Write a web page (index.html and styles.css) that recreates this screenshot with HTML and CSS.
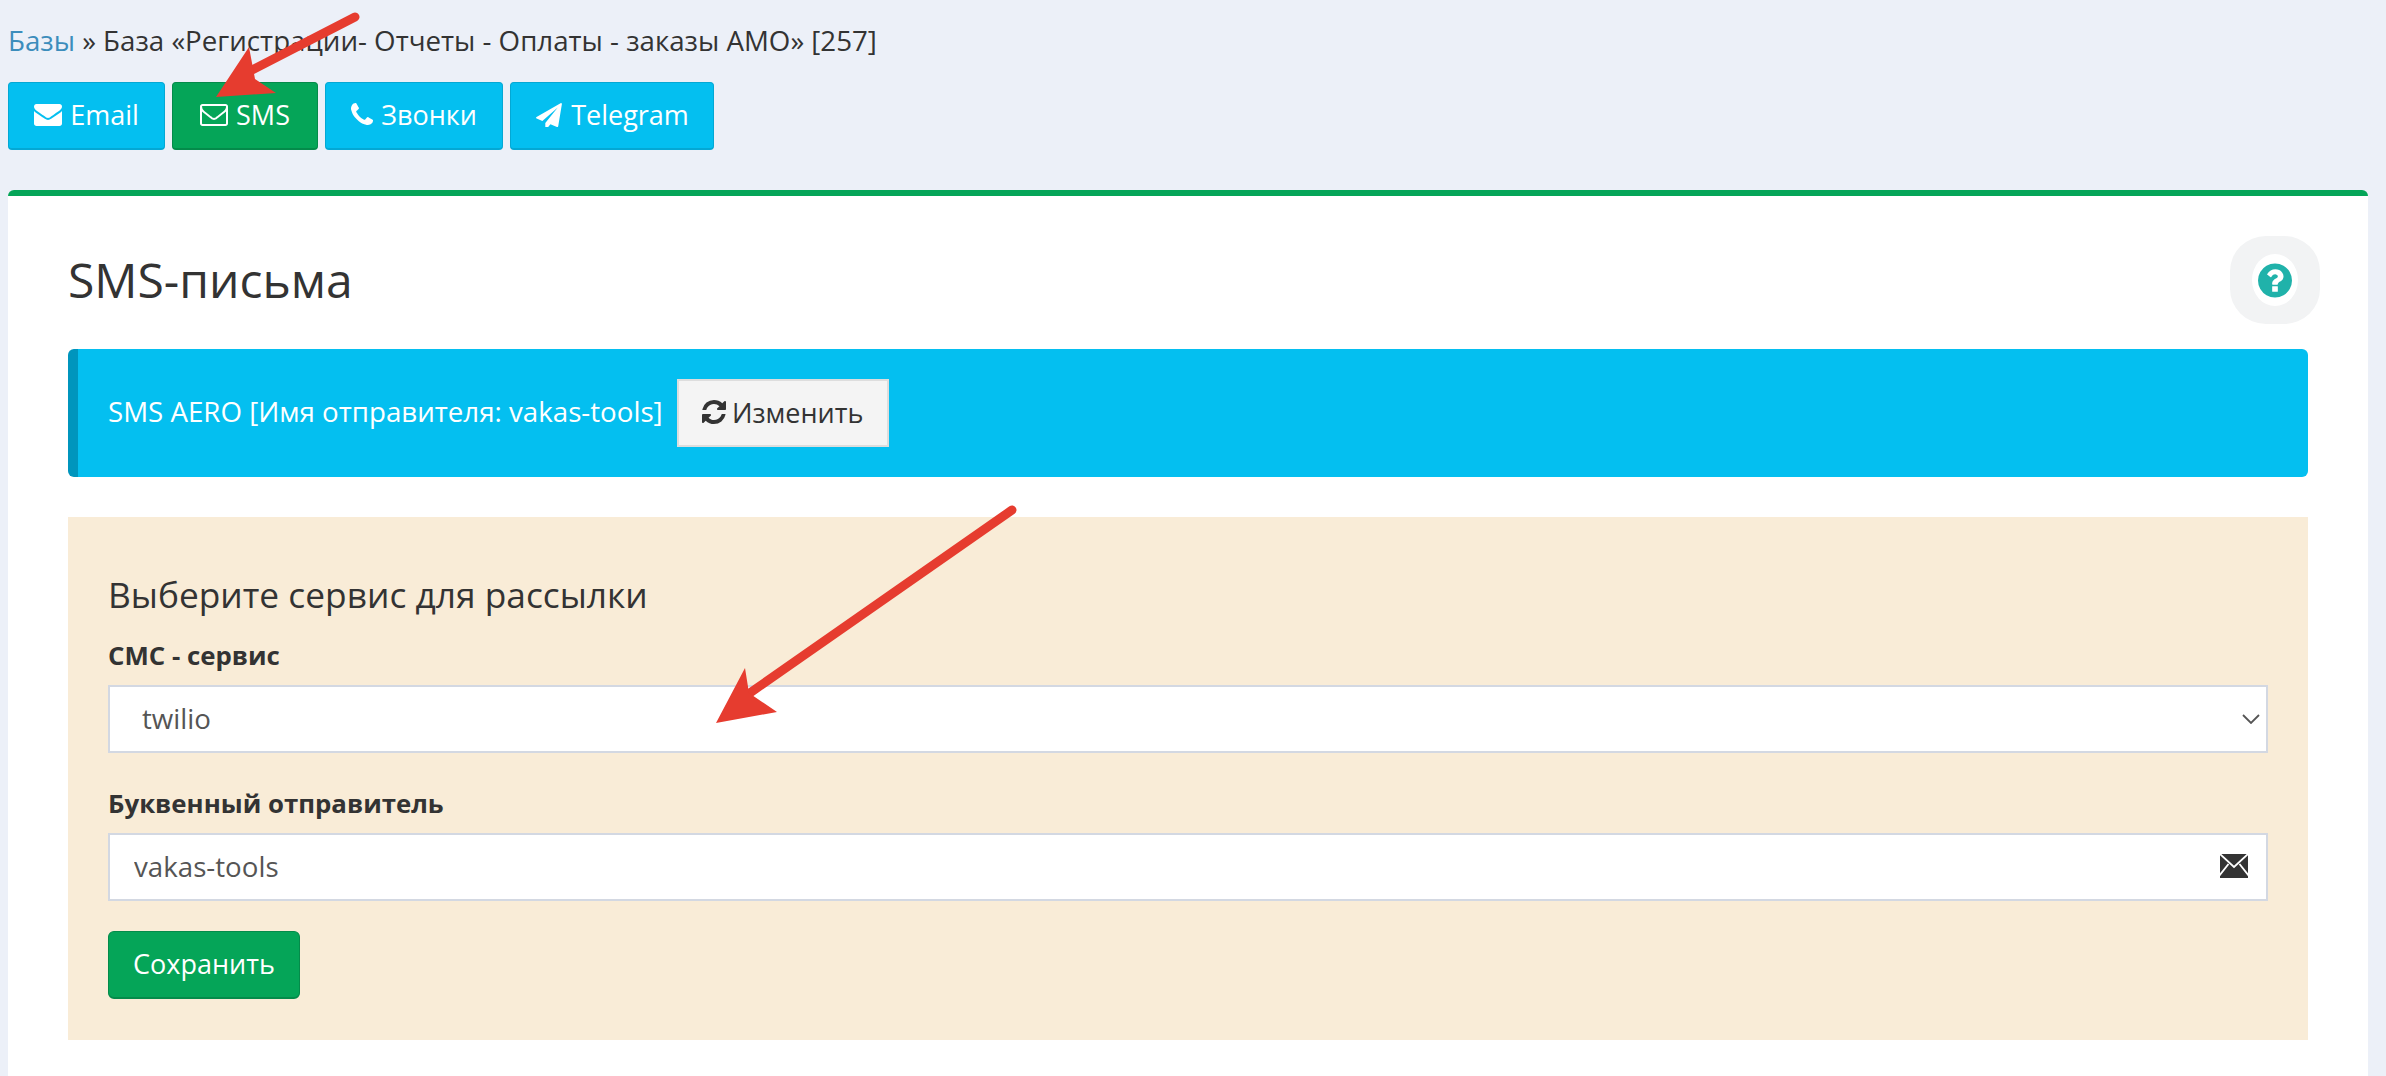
FILE: index.html
```html
<!DOCTYPE html>
<html lang="ru">
<head>
<meta charset="utf-8">
<title>SMS-письма</title>
<link rel="stylesheet" href="styles.css">
</head>
<body>
<svg width="0" height="0" class="defs">
  <symbol id="i-envelope" viewBox="0 256 1792 1408"><path d="M1792 710v794q0 66-47 113t-113 47h-1472q-66 0-113-47t-47-113v-794q44 49 101 87 362 246 497 345 57 42 92.5 65.5t94.5 48 110 24.5h2q51 0 110-24.5t94.5-48 92.5-65.5q170-123 498-345 57-39 100-87zm0-294q0 79-49 151t-122 123q-376 261-468 325-10 7-42.5 30.5t-54 38-52 32.5-57.5 27-50 9h-2q-23 0-50-9t-57.5-27-52-32.5-54-38-42.5-30.5q-91-64-262-182.5t-205-142.5q-62-42-117-115.5t-55-136.5q0-78 41.5-130t118.5-52h1472q65 0 112.5 47t47.5 113z"/></symbol>
  <symbol id="i-envelope-o" viewBox="0 256 1792 1408"><path d="M1664 1504v-768q-32 36-69 66-268 206-426 338-51 43-83 67t-86.5 48.5-102.5 24.5h-2q-48 0-102.5-24.5t-86.5-48.5-83-67q-158-132-426-338-37-30-69-66v768q0 13 9.5 22.5t22.5 9.5h1472q13 0 22.5-9.5t9.5-22.5zm0-1051v-24.5l-.5-13-3-12.5-5.5-9-9-7.5-14-2.5h-1472q-13 0-22.5 9.5t-9.5 22.5q0 168 147 284 193 152 401 317 6 5 35 29.5t46 37.5 44.5 31.5 50.5 27.5 43 9h2q20 0 43-9t50.5-27.5 44.5-31.5 46-37.5 35-29.5q208-165 401-317 54-43 100.5-115.5t46.5-131.5zm128-37v1088q0 66-47 113t-113 47h-1472q-66 0-113-47t-47-113v-1088q0-66 47-113t113-47h1472q66 0 113 47t47 113z"/></symbol>
  <symbol id="i-phone" viewBox="192 192 1408 1408"><path d="M1600 1240q0 27-10 70.5t-21 68.5q-21 50-122 106-94 51-186 51-27 0-53-3.5t-57.5-12.5-47-14.5-55.5-20.5-49-18q-98-35-175-83-127-79-264-216t-216-264q-48-77-83-175-3-9-18-49t-20.5-55.5-14.5-47-12.5-57.5-3.5-53q0-92 51-186 56-101 106-122 25-11 68.5-21t70.5-10q14 0 21 3 18 6 53 76 11 19 30 54t35 63.5 31 53.5q3 4 17.5 25t21.5 35.5 7 28.5q0 20-28.5 50t-62 55-62 53-28.5 46q0 9 5 22.5t8.5 20.5 14 24 11.5 19q76 137 174 235t235 174q2 1 19 11.5t24 14 20.5 8.5 22.5 5q18 0 46-28.5t53-62 55-62 50-28.5q14 0 28.5 7t35.5 21.5 25 17.5q25 15 53.5 31t63.5 35 54 30q70 35 76 53 3 7 3 21z"/></symbol>
  <symbol id="i-plane" viewBox="0 0 1792 1664"><path d="M1764 11q33 24 27 64l-256 1536q-5 29-32 45-14 8-31 8-11 0-24-5l-453-185-242 295q-18 23-49 23-13 0-22-4-19-7-30.5-23.5t-11.5-36.5v-349l864-1059-1069 925-395-162q-37-14-40-55-2-40 32-59l1664-960q15-9 32-9 20 0 36 11z"/></symbol>
  <symbol id="i-refresh" viewBox="128 128 1536 1536"><path d="M1639 1056q0 5-1 7-64 268-268 434.5t-478 166.5q-146 0-282.5-55t-243.5-157l-129 129q-19 19-45 19t-45-19-19-45v-448q0-26 19-45t45-19h448q26 0 45 19t19 45-19 45l-137 137q71 66 161 102t187 36q134 0 250-65t186-179q11-17 53-117 8-23 30-23h192q13 0 22.5 9.5t9.5 22.5zm25-800v448q0 26-19 45t-45 19h-448q-26 0-45-19t-19-45 19-45l138-138q-148-137-349-137-134 0-250 65t-186 179q-11 17-53 117-8 23-30 23h-199q-13 0-22.5-9.5t-9.5-22.5v-7q65-268 270-434.5t480-166.5q146 0 284 55.5t245 156.5l130-129q19-19 45-19t45 19 19 45z"/></symbol>
</svg>

<nav class="crumbs"><a class="crumb-link" href="#">Базы</a> » База «Регистрации- Отчеты - Оплаты - заказы АМО» [257]</nav>

<div class="tabs">
  <a class="tab tab-email" href="#"><svg class="ico ico-env"><use href="#i-envelope"/></svg>Email</a>
  <a class="tab tab-active" href="#"><svg class="ico ico-env"><use href="#i-envelope-o"/></svg>SMS</a>
  <a class="tab tab-calls" href="#"><svg class="ico ico-phone"><use href="#i-phone"/></svg>Звонки</a>
  <a class="tab tab-tg" href="#"><svg class="ico ico-env"><use href="#i-plane"/></svg>Telegram</a>
</div>

<main class="card">
  <header class="card-head">
    <h1 class="title">SMS-письма</h1>
    <a class="help" href="#" aria-label="Помощь">
      <span class="help-ring">
        <svg class="help-ico" viewBox="128 128 1536 1536"><path d="M1024 1376v-192q0-14-9-23t-23-9h-192q-14 0-23 9t-9 23v192q0 14 9 23t23 9h192q14 0 23-9t9-23zm256-672q0-88-55.5-163t-138.5-116-170-41q-243 0-371 213-15 24 8 42l132 100q7 6 19 6 16 0 25-12 53-68 86-92 34-24 86-24 48 0 85.5 26t37.5 59q0 38-20 61t-68 45q-63 28-115.5 86.5t-52.5 125.5v36q0 14 9 23t23 9h192q14 0 23-9t9-23q0-19 21.5-49.5t54.5-49.5q32-18 49-28.5t46-35 44.5-48 28-60.5 12.5-81zm384 192q0 209-103 385.5t-279.5 279.5-385.5 103-385.5-103-279.5-279.5-103-385.5 103-385.5 279.5-279.5 385.5-103 385.5 103 279.5 279.5 103 385.5z"/></svg>
      </span>
    </a>
  </header>

  <div class="notice">
    <span class="notice-text">SMS AERO [Имя отправителя: vakas-tools]</span>
    <a class="change" href="#"><svg class="ico ico-refresh"><use href="#i-refresh"/></svg>Изменить</a>
  </div>

  <form class="panel">
    <h2 class="panel-title">Выберите сервис для рассылки</h2>
    <div class="field">
      <label class="label" for="svc">СМС - сервис</label>
      <div class="control">
        <select class="input select" id="svc"><option>twilio</option></select>
        <svg class="chevron" viewBox="0 0 18 10"><path d="M1 1l8 8 8-8" fill="none" stroke="#555" stroke-width="1.8"/></svg>
      </div>
    </div>
    <div class="field">
      <label class="label" for="snd">Буквенный отправитель</label>
      <div class="control">
        <input class="input" id="snd" value="vakas-tools">
        <svg class="mail" viewBox="0 0 28 24"><rect width="28" height="24" fill="#333"/><path d="M0 0l14 13L28 0M-1 22l9.500-12M29 22l-9.500-12" fill="none" stroke="#fff" stroke-width="1.800"/></svg>
      </div>
    </div>
    <button class="save" type="button">Сохранить</button>
  </form>
</main>

<svg class="arrows" viewBox="0 0 2386 1076" aria-hidden="true">
  <path d="M355 17L252 70" class="shaft"/>
  <path d="M216 97L249 47 255 79 276 93Z" class="head"/>
  <path d="M1012 510L747 695" class="shaft"/>
  <path d="M716 723L745 668 749 693 777 712Z" class="head"/>
</svg>
</body>
</html>
```
FILE: styles.css
```css
* { box-sizing: border-box; }
html, body { height: 1076px; overflow: hidden; }
body {
  margin: 0;
  padding: 0 18px 0 8px;
  background: #ecf0f8;
  color: #333;
  font-family: "Open Sans", "Noto Sans", sans-serif;
  font-size: 27.700px;
  position: relative;
}
.defs { position: absolute; }
.crumbs { padding-top: 22px; height: 82px; line-height: 36px; white-space: nowrap; }
.crumb-link { color: #3c8dbc; text-decoration: none; }
.tabs { display: flex; gap: 7px; font-size: 27px; }
.tab {
  display: flex; align-items: center; justify-content: center; gap: 8px;
  height: 68px; padding-bottom: 2px;
  background: #04bff0; border: 1px solid #04a8d4; border-bottom-width: 2px; border-radius: 4px;
  color: #fff; text-decoration: none;
}
.tab-email { width: 157px; }
.tab-active { width: 146px; background: #05a558; border-color: #048b4a; }
.tab-calls { width: 178px; }
.tab-tg { width: 204px; }
.ico { fill: currentColor; display: block; flex: none; }
.ico-env { width: 28px; height: 24px; }
.ico-phone { width: 22px; height: 24px; }
.ico-refresh { width: 24px; height: 24px; }
.card {
  margin-top: 40px;
  height: 900px;
  padding: 40px 60px 0;
  background: #fff;
  border-top: 6px solid #05a558;
  border-radius: 6px 6px 0 0;
}
.card-head { display: flex; justify-content: space-between; align-items: center; height: 88px; margin: 0 -12px 25px 0; }
.title { margin: 0; font-size: 48px; font-weight: 400; line-height: 1.2; }
.help { width: 90px; height: 88px; background: #f2f3f4; border-radius: 40%; display: flex; align-items: center; justify-content: center; }
.help-ring { width: 46px; height: 52px; border-radius: 50%; background: #fff; display: flex; align-items: center; justify-content: center; }
.help-ico { width: 34px; height: 35px; fill: #20b2aa; display: block; }
.notice {
  display: flex; align-items: center; gap: 14px;
  height: 128px; padding: 0 0 0 30px;
  background: #04bff0; border-left: 10px solid #0095bd; border-radius: 6px;
  color: #fff; margin-bottom: 40px;
}
.notice-text { padding-bottom: 4px; }
.change {
  display: flex; align-items: center; gap: 6px;
  width: 212px; height: 68px; padding-bottom: 2px; justify-content: center;
  background: #f4f4f4; border: 2px solid #ddd; color: #333; text-decoration: none; font-size: 27px;
}
.panel { background: #f9ecd7; height: 523px; padding: 56px 40px 40px; }
.panel-title { margin: 0 0 22px; font-size: 35.300px; font-weight: 400; line-height: 42px; }
.field { margin-bottom: 32px; }
.field:last-of-type { margin-bottom: 30px; }
.label { display: block; font-size: 25.800px; font-weight: 700; line-height: 36px; margin-bottom: 12px; }
.control { position: relative; }
.input {
  display: block; width: 100%; height: 68px;
  padding: 0 24px 3px; border: 2px solid #d3d8e2; border-radius: 0;
  background: #fff; color: #555; font: inherit; outline: 0;
}
.select { appearance: none; padding-left: 32px; }
.chevron { position: absolute; right: 8px; top: 29px; width: 18px; height: 10px; }
.mail { position: absolute; right: 20px; top: 21px; width: 28px; height: 24px; }
.save {
  display: block; width: 192px; height: 68px; padding: 0 0 2px;
  background: #05a558; border: 1px solid #048b4a; border-bottom-width: 2px; border-radius: 6px;
  color: #fff; font: inherit; font-size: 27px;
}
.arrows { position: absolute; left: 0; top: 0; width: 2386px; height: 1076px; pointer-events: none; }
.shaft { fill: none; stroke: #e63c2f; stroke-width: 9; stroke-linecap: round; }
.head { fill: #e63c2f; }
```
